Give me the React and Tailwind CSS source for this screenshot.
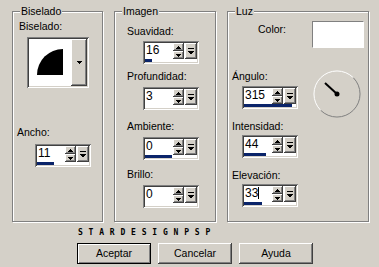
import React from 'react'

const sunken =
  'shadow-[inset_1px_1px_0_#808080,inset_-1px_-1px_0_#fff,inset_2px_2px_0_#404040,inset_-2px_-2px_0_#d4d0c8]'
const raised =
  'shadow-[inset_-1px_-1px_0_#404040,inset_1px_1px_0_#fff,inset_-2px_-2px_0_#808080]'

const Tri = ({ up }) => (
  <svg width="5" height="3" viewBox="0 0 5 3" shapeRendering="crispEdges">
    <polygon points={up ? '0,3 5,3 2.5,0' : '0,0 5,0 2.5,3'} fill="#000" />
  </svg>
)

const Spin = ({ value, bar = 0, cursor = false, className = '' }) => (
  <div className={`w-[56px] h-[23px] p-[2px] bg-white flex flex-col ${sunken} ${className}`}>
    <div className="flex h-[16px]">
      <div className="w-[28px] bg-white text-[12px] leading-[12px] pl-[1px] pt-[1px] flex items-start">
        {value}
        {cursor && <span className="w-px h-[12px] bg-black" />}
      </div>
      <div className="w-[11px] flex flex-col">
        <div className={`h-[8px] bg-[#d4d0c8] flex items-center justify-center ${raised}`}>
          <Tri up />
        </div>
        <div className={`h-[8px] bg-[#d4d0c8] flex items-center justify-center ${raised}`}>
          <Tri />
        </div>
      </div>
      <div className="w-px bg-white" />
      <div className={`w-[12px] bg-[#d4d0c8] flex items-center justify-center ${raised}`}>
        <svg width="6" height="7" viewBox="0 0 6 7" shapeRendering="crispEdges">
          <rect x="0" y="0" width="6" height="1" fill="#000" />
          <polygon points="0,3 6,3 3,6.5" fill="#000" />
        </svg>
      </div>
    </div>
    <div className="h-[3px] bg-white">
      <div className="h-full bg-[#0a246a]" style={{ width: bar }} />
    </div>
  </div>
)

// etched frame; the title sits in flow and is pulled up over the top border
const Group = ({ title, className = '', children }) => (
  <div
    className={`h-[211px] border border-[#808080] shadow-[inset_1px_1px_0_#fff,1px_1px_0_#fff] flex flex-col ${className}`}
  >
    <span className="self-start -mt-[7px] ml-[7px] px-[1px] bg-[#d4d0c8] leading-[13px] whitespace-nowrap">
      {title}
    </span>
    {children}
  </div>
)

const Label = ({ className = '', children }) => (
  <div className={`leading-[13px] whitespace-nowrap ${className}`}>{children}</div>
)

const Button = ({ children, primary = false }) => (
  <button
    className={`w-[74px] h-[21px] bg-[#d4d0c8] flex items-center justify-center leading-[13px] ${
      primary
        ? 'border border-black shadow-[inset_1px_1px_0_#fff,inset_-1px_-1px_0_#808080]'
        : raised
    }`}
  >
    {children}
  </button>
)

export default function App() {
  return (
    <div className="w-[379px] h-[267px] bg-[#d4d0c8] pt-[11px] pl-[12px] text-black text-[10.5px] font-['Liberation_Sans',Arial,sans-serif] overflow-hidden">
      <div className="flex gap-[11px]">
        <Group title="Biselado" className="w-[91px]">
          <Label className="ml-[6px] mt-[2px]">Biselado:</Label>
          <div className={`ml-[14px] mt-[4px] w-[62px] h-[51px] p-[2px] flex bg-white ${sunken}`}>
            <div className="flex-1 bg-white">
              <svg width="42" height="47" viewBox="0 0 42 47">
                <path d="M34,36 L8,36 A26,26 0 0 1 34,10 Z" fill="#000" />
              </svg>
            </div>
            <div className={`w-[16px] bg-[#d4d0c8] flex items-center justify-center ${raised}`}>
              <Tri />
            </div>
          </div>
          <Label className="ml-[4px] mt-[38px]">Ancho:</Label>
          <Spin value="11" bar={17} className="ml-[22px] mt-[5px]" />
        </Group>

        <Group title="Imagen" className="w-[102px]">
          <Label className="ml-[12px] mt-[7px]">Suavidad:</Label>
          <Spin value="16" bar={7} className="ml-[28px] mt-[3px]" />
          <Label className="ml-[12px] mt-[6px]">Profundidad:</Label>
          <Spin value="3" bar={0} className="ml-[28px] mt-[4px]" />
          <Label className="ml-[12px] mt-[10px]">Ambiente:</Label>
          <Spin value="0" bar={27} className="ml-[28px] mt-[4px]" />
          <Label className="ml-[12px] mt-[8px]">Brillo:</Label>
          <Spin value="0" bar={0} className="ml-[28px] mt-[4px]" />
        </Group>

        <Group title="Luz" className="w-[142px]">
          <div className="flex mt-[3px]">
            <Label className="ml-[30px] mt-[2px] w-[54px]">Color:</Label>
            <div className="w-[52px] h-[27px] bg-white border-t border-l border-[#808080] border-r-white border-b-white border-r border-b" />
          </div>
          <div className="flex">
            <div className="w-[70px] flex flex-col">
              <Label className="ml-[4px] mt-[22px]">Ángulo:</Label>
              <Spin value="315" bar={48} className="ml-[14px] mt-[3px]" />
              <Label className="ml-[4px] mt-[11px]">Intensidad:</Label>
              <Spin value="44" bar={22} className="ml-[14px] mt-[2px]" />
              <Label className="ml-[4px] mt-[11px]">Elevación:</Label>
              <Spin value="33" bar={18} cursor className="ml-[14px] mt-[2px]" />
            </div>
            <svg width="48" height="48" viewBox="0 0 48 48" className="ml-[15px] mt-[22px]">
              <path d="M7.7,40.3 A23,23 0 0 1 40.3,7.7" fill="none" stroke="#fff" strokeWidth="1" />
              <path d="M40.3,7.7 A23,23 0 0 1 7.7,40.3" fill="none" stroke="#808080" strokeWidth="1" />
              <line x1="24" y1="24" x2="12" y2="13" stroke="#000" strokeWidth="2" />
              <circle cx="24" cy="24" r="2.5" fill="#000" />
            </svg>
          </div>
        </Group>
      </div>

      <div className="ml-[66px] mt-[7px] leading-[8px] text-[8px] font-bold tracking-[5.8px] text-black font-['DejaVu_Sans_Mono',monospace]">
        STARDESIGNPSP
      </div>

      <div className="flex gap-[7px] ml-[65px] mt-[6px]">
        <Button primary>Aceptar</Button>
        <Button>Cancelar</Button>
        <Button>Ayuda</Button>
      </div>
    </div>
  )
}
